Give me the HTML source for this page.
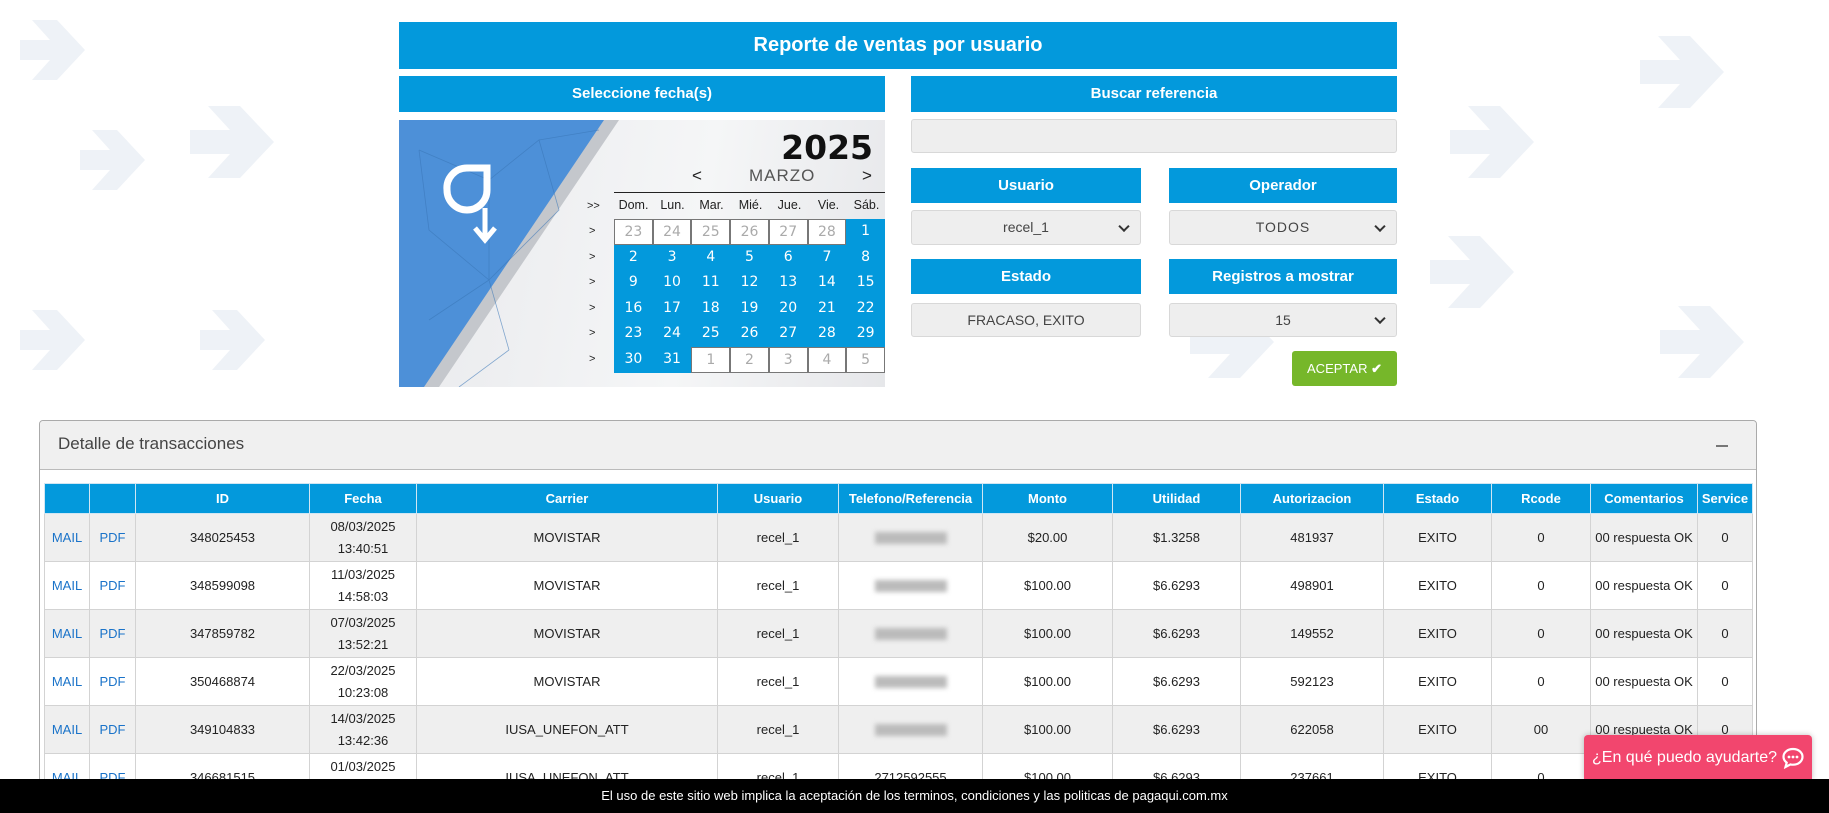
<!DOCTYPE html>
<html style="width:1829px;height:813px;overflow:hidden"><head><meta charset="utf-8"><style>
*{box-sizing:border-box;margin:0;padding:0}
body{width:1829px;height:813px;overflow:hidden;background:#fff;font-family:"Liberation Sans",sans-serif;position:relative;color:#222}
.abs{position:absolute}
.bar{position:absolute;background:#0399dc;color:#fff;font-weight:bold;text-align:center}
.inp{position:absolute;background:#eeeeee;border:1px solid #d8d8d8;border-radius:3px;font-size:14px;color:#444;text-align:center}
.sel::after{content:"";position:absolute;right:12px;top:50%;width:6px;height:6px;border-right:2px solid #333;border-bottom:2px solid #333;transform:translateY(-70%) rotate(45deg)}
table{border-collapse:collapse;table-layout:fixed;position:absolute;left:44px;top:483px;width:1708px;font-size:13px}
th{background:#0399dc;color:#fff;height:30px;border:1px solid #d0e6f3;font-size:13px}
td{height:48px;text-align:center;border:1px solid #d3d3d3;line-height:22px;white-space:nowrap}
tr:nth-child(even) td{background:#efefef}
td.l{color:#1a73c9}
.blur{display:inline-block;width:72px;height:12px;background:#bbb;filter:blur(2.5px);vertical-align:middle}
#clip{position:absolute;left:0;top:0;width:1829px;height:813px;overflow:hidden}
</style></head><body><div id="clip">
<svg class="abs" style="left:0;top:0" width="1829" height="813">
<g fill="#eef2f7">
<path d="M20 40h30l-18-20h25l28 30-28 30h-25l18-20H20z"/>
<path d="M80 150h30l-18-20h25l28 30-28 30h-25l18-20H80z"/>
<path d="M20 330h30l-18-20h25l28 30-28 30h-25l18-20H20z"/>
<path d="M200 330h30l-18-20h25l28 30-28 30h-25l18-20h-30z"/>
<path d="M190 130h40l-22-24h32l34 36-34 36h-32l22-24h-40z"/>
<path d="M1450 130h40l-22-24h32l34 36-34 36h-32l22-24h-40z"/>
<path d="M1640 60h40l-22-24h32l34 36-34 36h-32l22-24h-40z"/>
<path d="M1660 330h40l-22-24h32l34 36-34 36h-32l22-24h-40z"/>
<path d="M1190 330h40l-22-24h32l34 36-34 36h-32l22-24h-40z"/>
<path d="M1430 260h40l-22-24h32l34 36-34 36h-32l22-24h-40z"/>
</g></svg>

<div class="bar" style="left:399px;top:22px;width:998px;height:47px;line-height:47px;font-size:20px">Reporte de ventas por usuario</div>
<div class="bar" style="left:399px;top:76px;width:486px;height:36px;line-height:36px;font-size:15px">Seleccione fecha(s)</div>
<div class="bar" style="left:911px;top:76px;width:486px;height:36px;line-height:36px;font-size:15px">Buscar referencia</div>

<div class="abs" style="left:399px;top:120px;width:486px;height:267px;background:linear-gradient(100deg,#e8e9ec,#f5f6f7 60%,#e6e7ea);overflow:hidden">
<svg class="abs" style="left:0;top:0" width="486" height="267">
<polygon points="0,0 220,0 40,267 0,267" fill="#c4c7cc"/>
<polygon points="0,0 205,0 25,267 0,267" fill="#4d90d8"/>
<g stroke="#3b77b8" stroke-width="0.8" fill="none" opacity="0.6"><path d="M20 30L90 60 140 20 160 90 90 160 30 110 20 30M90 60L90 160M140 20L200 10M30 200L90 160 110 230M60 267L110 230"/></g>
<path d="M48 70a20 20 0 1 0 40 0v-22h-20a20 20 0 0 0-20 22z" fill="none" stroke="#fff" stroke-width="7"/>
<path d="M86 88v30M76 108l10 12 10-12" stroke="#fff" stroke-width="5" fill="none"/>
</svg>
<div class="abs" style="right:12px;top:8px;font-size:33px;font-weight:bold;font-family:'DejaVu Sans',sans-serif;color:#111">2025</div>
<div class="abs" style="left:293px;top:46px;font-size:17px">&lt;</div>
<div class="abs" style="left:350px;top:46px;font-size:17px;color:#555;letter-spacing:1px">MARZO</div>
<div class="abs" style="left:463px;top:46px;font-size:17px">&gt;</div>
<div class="abs" style="left:215px;top:72px;width:271px;height:1px;background:#222"></div>
<div class="abs" style="left:188px;top:80px;font-size:11px">&gt;&gt;</div>
<div class="abs" style="left:215px;top:78px;width:271px;display:flex;font-size:12.5px">
<span style="width:39px;text-align:center">Dom.</span><span style="width:39px;text-align:center">Lun.</span><span style="width:39px;text-align:center">Mar.</span><span style="width:39px;text-align:center">Mié.</span><span style="width:39px;text-align:center">Jue.</span><span style="width:39px;text-align:center">Vie.</span><span style="width:37px;text-align:center">Sáb.</span></div>
<div class="abs" style="left:190px;top:99px;font-size:11px;line-height:25.6px">&gt;<br>&gt;<br>&gt;<br>&gt;<br>&gt;<br>&gt;</div>
<div class="abs" style="left:215px;top:99px;width:271px;display:grid;grid-template-columns:repeat(7,1fr);grid-auto-rows:25.6px;font-size:14px;font-family:'DejaVu Sans',sans-serif;text-align:center;line-height:25.6px">
<span style="background:#fff;color:#aaa;border:1px solid #777">23</span><span style="background:#fff;color:#aaa;border:1px solid #777">24</span><span style="background:#fff;color:#aaa;border:1px solid #777">25</span><span style="background:#fff;color:#aaa;border:1px solid #777">26</span><span style="background:#fff;color:#aaa;border:1px solid #777">27</span><span style="background:#fff;color:#aaa;border:1px solid #777">28</span><span style="background:#0399dc;color:#fff">1</span>
</div>
<div class="abs" style="left:215px;top:124.6px;width:271px;height:128px;background:#0399dc;display:grid;grid-template-columns:repeat(7,1fr);grid-auto-rows:25.6px;font-size:14px;font-family:'DejaVu Sans',sans-serif;text-align:center;line-height:25.6px;color:#fff">
<span>2</span><span>3</span><span>4</span><span>5</span><span>6</span><span>7</span><span>8</span>
<span>9</span><span>10</span><span>11</span><span>12</span><span>13</span><span>14</span><span>15</span>
<span>16</span><span>17</span><span>18</span><span>19</span><span>20</span><span>21</span><span>22</span>
<span>23</span><span>24</span><span>25</span><span>26</span><span>27</span><span>28</span><span>29</span>
<span>30</span><span>31</span><span style="background:#fff;color:#aaa;border:1px solid #777">1</span><span style="background:#fff;color:#aaa;border:1px solid #777">2</span><span style="background:#fff;color:#aaa;border:1px solid #777">3</span><span style="background:#fff;color:#aaa;border:1px solid #777">4</span><span style="background:#fff;color:#aaa;border:1px solid #777">5</span>
</div>
</div>

<div class="inp" style="left:911px;top:119px;width:486px;height:34px"></div>
<div class="bar" style="left:911px;top:168px;width:230px;height:35px;line-height:35px;font-size:15px">Usuario</div>
<div class="bar" style="left:1169px;top:168px;width:228px;height:35px;line-height:35px;font-size:15px">Operador</div>
<div class="inp sel" style="left:911px;top:210px;width:230px;height:35px;line-height:33px">recel_1</div>
<div class="inp sel" style="left:1169px;top:210px;width:228px;height:35px;line-height:33px;letter-spacing:1px">TODOS</div>
<div class="bar" style="left:911px;top:259px;width:230px;height:35px;line-height:35px;font-size:15px">Estado</div>
<div class="bar" style="left:1169px;top:259px;width:228px;height:35px;line-height:35px;font-size:15px">Registros a mostrar</div>
<div class="inp" style="left:911px;top:303px;width:230px;height:34px;line-height:32px">FRACASO, EXITO</div>
<div class="inp sel" style="left:1169px;top:303px;width:228px;height:34px;line-height:32px">15</div>
<div class="abs" style="left:1292px;top:351px;width:105px;height:35px;background:#76b72a;border-radius:3px;color:#fff;font-size:13px;line-height:35px;text-align:center">ACEPTAR <span style="font-weight:bold">✔</span></div>

<div class="abs" style="left:39px;top:420px;width:1718px;height:400px;border:1px solid #aaa;border-radius:4px;background:#fff"></div>
<div class="abs" style="left:40px;top:421px;width:1716px;height:49px;background:#f0f0f0;border-bottom:1px solid #bbb;border-radius:4px 4px 0 0"></div>
<div class="abs" style="left:58px;top:434px;font-size:17px;color:#444">Detalle de transacciones</div>
<div class="abs" style="left:1716px;top:445px;width:12px;height:2px;background:#777"></div>

<table>
<colgroup><col style="width:45px"><col style="width:46px"><col style="width:174px"><col style="width:107px"><col style="width:301px"><col style="width:121px"><col style="width:144px"><col style="width:130px"><col style="width:128px"><col style="width:143px"><col style="width:108px"><col style="width:99px"><col style="width:107px"><col style="width:55px"></colgroup>
<tr><th></th><th></th><th>ID</th><th>Fecha</th><th>Carrier</th><th>Usuario</th><th>Telefono/Referencia</th><th>Monto</th><th>Utilidad</th><th>Autorizacion</th><th>Estado</th><th>Rcode</th><th>Comentarios</th><th>Service</th></tr>
<tr><td class="l">MAIL</td><td class="l">PDF</td><td>348025453</td><td>08/03/2025<br>13:40:51</td><td>MOVISTAR</td><td>recel_1</td><td><span class="blur"></span></td><td>$20.00</td><td>$1.3258</td><td>481937</td><td>EXITO</td><td>0</td><td>00 respuesta OK</td><td>0</td></tr>
<tr><td class="l">MAIL</td><td class="l">PDF</td><td>348599098</td><td>11/03/2025<br>14:58:03</td><td>MOVISTAR</td><td>recel_1</td><td><span class="blur"></span></td><td>$100.00</td><td>$6.6293</td><td>498901</td><td>EXITO</td><td>0</td><td>00 respuesta OK</td><td>0</td></tr>
<tr><td class="l">MAIL</td><td class="l">PDF</td><td>347859782</td><td>07/03/2025<br>13:52:21</td><td>MOVISTAR</td><td>recel_1</td><td><span class="blur"></span></td><td>$100.00</td><td>$6.6293</td><td>149552</td><td>EXITO</td><td>0</td><td>00 respuesta OK</td><td>0</td></tr>
<tr><td class="l">MAIL</td><td class="l">PDF</td><td>350468874</td><td>22/03/2025<br>10:23:08</td><td>MOVISTAR</td><td>recel_1</td><td><span class="blur"></span></td><td>$100.00</td><td>$6.6293</td><td>592123</td><td>EXITO</td><td>0</td><td>00 respuesta OK</td><td>0</td></tr>
<tr><td class="l">MAIL</td><td class="l">PDF</td><td>349104833</td><td>14/03/2025<br>13:42:36</td><td>IUSA_UNEFON_ATT</td><td>recel_1</td><td><span class="blur"></span></td><td>$100.00</td><td>$6.6293</td><td>622058</td><td>EXITO</td><td>00</td><td>00 respuesta OK</td><td>0</td></tr>
<tr><td class="l">MAIL</td><td class="l">PDF</td><td>346681515</td><td>01/03/2025<br>10:11:42</td><td>IUSA_UNEFON_ATT</td><td>recel_1</td><td>2712592555</td><td>$100.00</td><td>$6.6293</td><td>237661</td><td>EXITO</td><td>0</td><td>00 respuesta OK</td><td>0</td></tr>
</table>

<div class="abs" style="left:1584px;top:735px;width:228px;height:45px;background:#f2466e;border-radius:4px 4px 0 0;color:#fff;font-size:16px;line-height:45px;padding-left:8px;white-space:nowrap;box-shadow:0 0 6px rgba(0,0,0,.25)">¿En qué puedo ayudarte? <svg width="24" height="22" viewBox="0 0 24 22" style="vertical-align:middle"><path d="M12 2C6.5 2 2.5 5.5 2.5 9.8c0 2.4 1.2 4.4 3.2 5.8L4.5 20l5-2.6c.8.2 1.6.3 2.5.3 5.5 0 9.5-3.5 9.5-7.9S17.5 2 12 2z" fill="none" stroke="#fff" stroke-width="2.2"/><circle cx="8" cy="10" r="1.4" fill="#fff"/><circle cx="12" cy="10" r="1.4" fill="#fff"/><circle cx="16" cy="10" r="1.4" fill="#fff"/></svg></div>
<div class="abs" style="left:0;top:779px;width:1829px;height:34px;background:#000;color:#fff;font-size:13px;line-height:34px;text-align:center">El uso de este sitio web implica la aceptación de los terminos, condiciones y las politicas de pagaqui.com.mx</div>
</div></body></html>
